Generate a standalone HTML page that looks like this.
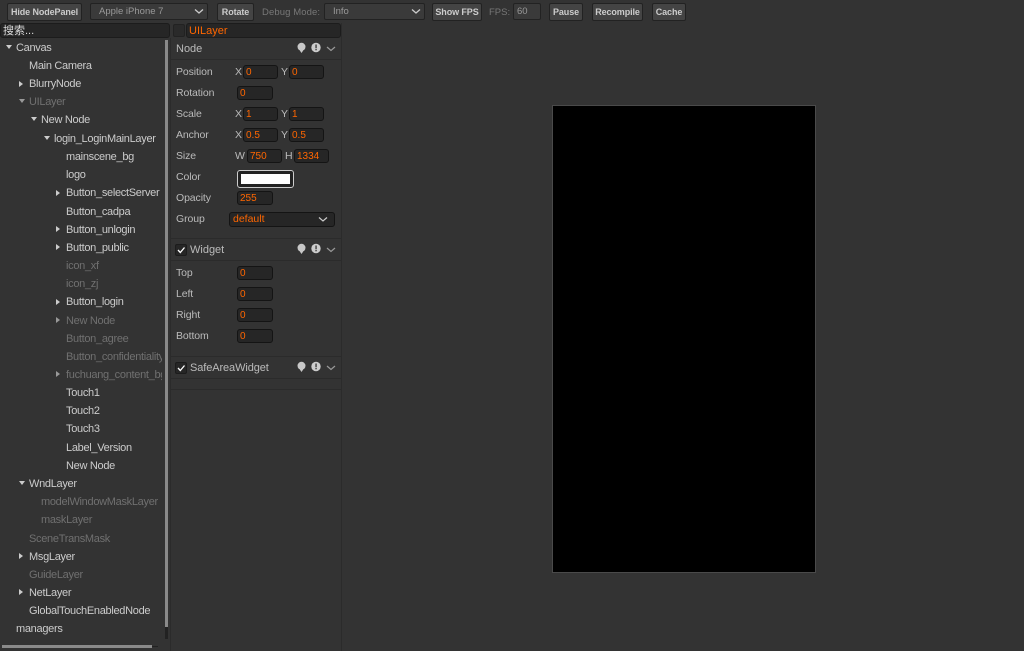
<!DOCTYPE html>
<html><head><meta charset="utf-8"><style>
html,body{margin:0;padding:0;width:1024px;height:651px;overflow:hidden;background:#333;}
body{position:relative;font-family:"Liberation Sans","Noto Sans CJK SC",sans-serif;font-size:11px;color:#ccc;}
.a,.b,.s,.t,.l,.i,.ar{position:absolute;box-sizing:border-box;white-space:nowrap;}
.b{top:3px;height:18px;background:#444;border:1px solid #222;border-radius:2px;color:#ccc;font-size:9px;font-weight:bold;line-height:17px;text-align:center;letter-spacing:-0.1px;}
.s{top:3px;height:17px;background:#3a3a3a;border:1px solid #222;border-radius:2px;color:#999;font-size:9.5px;line-height:16px;}
.t{line-height:14px;height:14px;font-size:11px;color:#ccc;margin-top:1px;letter-spacing:-0.3px;}
.g{color:#707070;}
.l{line-height:14px;height:14px;font-size:10.5px;color:#bbb;left:176px;letter-spacing:-0.1px;}
.x{line-height:14px;height:14px;font-size:10.5px;color:#bbb;position:absolute;}
.i{height:14px;background:#262626;border:1px solid #141414;border-radius:3px;color:#f60;font-size:10px;line-height:13px;padding-left:2px;}
.ar{width:0;height:0;}
.d{border-left:3px solid transparent;border-right:3px solid transparent;border-top:4px solid #ccc;margin-left:1px;}
.r{border-top:3px solid transparent;border-bottom:3px solid transparent;border-left:4px solid #ccc;margin-top:1px;}
.hr{position:absolute;left:171px;width:170px;height:1px;background:#2b2b2b;}
</style></head><body>
<div class="b" style="left:7px;width:75px">Hide NodePanel</div>
<div class="s" style="left:90px;width:118px;padding-left:8px">Apple iPhone 7<svg style="position:absolute;right:3px;top:4px" width="10" height="7"><path d="M1 1.5L5 5L9 1.5" stroke="#ccc" stroke-width="1.3" fill="none"/></svg></div>
<div class="b" style="left:217px;width:37px">Rotate</div>
<div class="a" style="left:262px;top:6px;color:#777;font-size:9.5px;line-height:13px;letter-spacing:0.1px">Debug Mode:</div>
<div class="s" style="left:324px;width:101px;padding-left:8px">Info<svg style="position:absolute;right:3px;top:4px" width="10" height="7"><path d="M1 1.5L5 5L9 1.5" stroke="#ccc" stroke-width="1.3" fill="none"/></svg></div>
<div class="b" style="left:432px;width:50px">Show FPS</div>
<div class="a" style="left:489px;top:6px;color:#777;font-size:9.5px;line-height:13px">FPS:</div>
<div class="s" style="left:513px;width:28px;padding-left:3px;background:#3a3a3a">60</div>
<div class="b" style="left:549px;width:34px">Pause</div>
<div class="b" style="left:592px;width:51px">Recompile</div>
<div class="b" style="left:652px;width:34px">Cache</div>

<div class="a" style="left:0;top:23px;width:170px;height:15px;background:#262626;border:1px solid #1c1c1c;border-radius:3px;color:#ddd;font-size:11px;line-height:14px;padding-left:2px">搜索...</div>
<div class="a" style="left:173px;top:24px;width:12px;height:13px;background:#2a2a2a;border:1px solid #222;border-radius:2px"></div>
<div class="a" style="left:186px;top:23px;width:155px;height:15px;background:#262626;border:1px solid #1c1c1c;border-radius:3px;color:#f60;font-size:11px;line-height:14px;padding-left:2px">UILayer</div>

<div class="ar d" style="left:5px;top:45px"></div><div class="t" style="left:16px;top:40px">Canvas</div>
<div class="t" style="left:29px;top:58px">Main Camera</div>
<div class="ar r" style="left:19px;top:80px"></div><div class="t" style="left:29px;top:76px">BlurryNode</div>
<div class="ar d" style="left:18px;top:99px;border-top-color:#999"></div><div class="t g" style="left:29px;top:94px">UILayer</div>
<div class="ar d" style="left:30px;top:117px"></div><div class="t" style="left:41px;top:112px">New Node</div>
<div class="ar d" style="left:43px;top:136px"></div><div class="t" style="left:54px;top:131px">login_LoginMainLayer</div>
<div class="t" style="left:66px;top:149px">mainscene_bg</div>
<div class="t" style="left:66px;top:167px">logo</div>
<div class="ar r" style="left:56px;top:189px"></div><div class="t" style="left:66px;top:185px">Button_selectServer</div>
<div class="t" style="left:66px;top:204px">Button_cadpa</div>
<div class="ar r" style="left:56px;top:225px"></div><div class="t" style="left:66px;top:222px">Button_unlogin</div>
<div class="ar r" style="left:56px;top:243px"></div><div class="t" style="left:66px;top:240px">Button_public</div>
<div class="t g" style="left:66px;top:258px">icon_xf</div>
<div class="t g" style="left:66px;top:276px">icon_zj</div>
<div class="ar r" style="left:56px;top:298px"></div><div class="t" style="left:66px;top:294px">Button_login</div>
<div class="ar r" style="left:56px;top:316px;border-left-color:#999"></div><div class="t g" style="left:66px;top:313px">New Node</div>
<div class="t g" style="left:66px;top:331px">Button_agree</div>
<div class="t g" style="left:66px;top:349px;width:96px;overflow:hidden">Button_confidentiality</div>
<div class="ar r" style="left:56px;top:370px;border-left-color:#999"></div><div class="t g" style="left:66px;top:367px;width:96px;overflow:hidden">fuchuang_content_bg</div>
<div class="t" style="left:66px;top:385px">Touch1</div>
<div class="t" style="left:66px;top:403px">Touch2</div>
<div class="t" style="left:66px;top:421px">Touch3</div>
<div class="t" style="left:66px;top:440px">Label_Version</div>
<div class="t" style="left:66px;top:458px">New Node</div>
<div class="ar d" style="left:18px;top:481px"></div><div class="t" style="left:29px;top:476px">WndLayer</div>
<div class="t g" style="left:41px;top:494px">modelWindowMaskLayer</div>
<div class="t g" style="left:41px;top:512px">maskLayer</div>
<div class="t g" style="left:29px;top:531px">SceneTransMask</div>
<div class="ar r" style="left:19px;top:552px"></div><div class="t" style="left:29px;top:549px">MsgLayer</div>
<div class="t g" style="left:29px;top:567px">GuideLayer</div>
<div class="ar r" style="left:19px;top:588px"></div><div class="t" style="left:29px;top:585px">NetLayer</div>
<div class="t" style="left:29px;top:603px">GlobalTouchEnabledNode</div>
<div class="t" style="left:16px;top:621px">managers</div>

<div class="a" style="left:165px;top:40px;width:3px;height:587px;background:#8a8a8a"></div>
<div class="a" style="left:165px;top:627px;width:3px;height:12px;background:#222"></div>
<div class="a" style="left:2px;top:645px;width:150px;height:3px;background:#8a8a8a"></div>
<div class="a" style="left:152px;top:646px;width:6px;height:1px;background:#222"></div>

<div class="a" style="left:170px;top:38px;width:1px;height:613px;background:#2b2b2b"></div>
<div class="a" style="left:341px;top:23px;width:1px;height:628px;background:#2b2b2b"></div>

<div class="x" style="left:176px;top:42px;font-size:11px">Node</div>
<div class="hr" style="top:59px"></div>
<div class="l" style="top:65px">Position</div>
<div class="x" style="left:235px;top:65px">X</div><div class="i" style="left:243px;top:65px;width:35px">0</div>
<div class="x" style="left:281px;top:65px">Y</div><div class="i" style="left:289px;top:65px;width:35px">0</div>
<div class="l" style="top:86px">Rotation</div><div class="i" style="left:237px;top:86px;width:36px">0</div>
<div class="l" style="top:107px">Scale</div>
<div class="x" style="left:235px;top:107px">X</div><div class="i" style="left:243px;top:107px;width:35px">1</div>
<div class="x" style="left:281px;top:107px">Y</div><div class="i" style="left:289px;top:107px;width:35px">1</div>
<div class="l" style="top:128px">Anchor</div>
<div class="x" style="left:235px;top:128px">X</div><div class="i" style="left:243px;top:128px;width:35px">0.5</div>
<div class="x" style="left:281px;top:128px">Y</div><div class="i" style="left:289px;top:128px;width:35px">0.5</div>
<div class="l" style="top:149px">Size</div>
<div class="x" style="left:235px;top:149px">W</div><div class="i" style="left:247px;top:149px;width:35px">750</div>
<div class="x" style="left:285px;top:149px">H</div><div class="i" style="left:294px;top:149px;width:35px">1334</div>
<div class="l" style="top:170px">Color</div>
<div class="a" style="left:237px;top:170px;width:57px;height:18px;background:#222;border:1px solid #ccc;border-radius:3px"><div style="margin:3px;height:10px;background:#fff"></div></div>
<div class="l" style="top:191px">Opacity</div><div class="i" style="left:237px;top:191px;width:36px">255</div>
<div class="l" style="top:212px">Group</div>
<div class="i" style="left:229px;top:212px;width:106px;height:15px;font-size:10.5px;padding-left:3px;line-height:13px">default<svg style="position:absolute;right:6px;top:3px" width="10" height="7"><path d="M1 1.5L5 5L9 1.5" stroke="#ccc" stroke-width="1.2" fill="none"/></svg></div>
<div class="hr" style="top:238px"></div>

<div class="a" style="left:175px;top:244px;width:12px;height:12px;background:#262626;border:1px solid #1c1c1c;border-radius:2px"><svg style="position:absolute;left:0;top:0" width="10" height="10"><path d="M2 5L4.3 7.5L8.5 2.500" stroke="#fff" stroke-width="1.3" fill="none"/></svg></div>
<div class="x" style="left:190px;top:243px;font-size:11px;color:#bbb">Widget</div>
<div class="hr" style="top:260px"></div>
<div class="l" style="top:266px">Top</div><div class="i" style="left:237px;top:266px;width:36px">0</div>
<div class="l" style="top:287px">Left</div><div class="i" style="left:237px;top:287px;width:36px">0</div>
<div class="l" style="top:308px">Right</div><div class="i" style="left:237px;top:308px;width:36px">0</div>
<div class="l" style="top:329px">Bottom</div><div class="i" style="left:237px;top:329px;width:36px">0</div>
<div class="hr" style="top:356px"></div>

<div class="a" style="left:175px;top:362px;width:12px;height:12px;background:#262626;border:1px solid #1c1c1c;border-radius:2px"><svg style="position:absolute;left:0;top:0" width="10" height="10"><path d="M2 5L4.3 7.5L8.5 2.500" stroke="#fff" stroke-width="1.3" fill="none"/></svg></div>
<div class="x" style="left:190px;top:361px;font-size:11px;color:#bbb;letter-spacing:-0.1px">SafeAreaWidget</div>
<div class="hr" style="top:378px"></div>
<div class="hr" style="top:389px"></div>

<svg class="a" style="left:295px;top:42px" width="42" height="14"><circle cx="6.500" cy="4.800" r="4" fill="#c8c8c8"/><path d="M4.800 8.500L8.200 8.500L6.500 11Z" fill="#c8c8c8"/><circle cx="21" cy="5.500" r="4.700" fill="#ccc"/><rect x="20.400" y="2.500" width="1.300" height="3.800" fill="#333"/><rect x="20.400" y="7" width="1.300" height="1.300" fill="#333"/><path d="M32 5L36 8.500L40 5" stroke="#999" stroke-width="1.200" fill="none"/></svg>
<svg class="a" style="left:295px;top:243px" width="42" height="14"><circle cx="6.500" cy="4.800" r="4" fill="#c8c8c8"/><path d="M4.800 8.500L8.200 8.500L6.500 11Z" fill="#c8c8c8"/><circle cx="21" cy="5.500" r="4.700" fill="#ccc"/><rect x="20.400" y="2.500" width="1.300" height="3.800" fill="#333"/><rect x="20.400" y="7" width="1.300" height="1.300" fill="#333"/><path d="M32 5L36 8.500L40 5" stroke="#999" stroke-width="1.200" fill="none"/></svg>
<svg class="a" style="left:295px;top:361px" width="42" height="14"><circle cx="6.500" cy="4.800" r="4" fill="#c8c8c8"/><path d="M4.800 8.500L8.200 8.500L6.500 11Z" fill="#c8c8c8"/><circle cx="21" cy="5.500" r="4.700" fill="#ccc"/><rect x="20.400" y="2.500" width="1.300" height="3.800" fill="#333"/><rect x="20.400" y="7" width="1.300" height="1.300" fill="#333"/><path d="M32 5L36 8.500L40 5" stroke="#999" stroke-width="1.200" fill="none"/></svg>

<div class="a" style="left:552px;top:105px;width:264px;height:468px;background:#000;border:1px solid #4a4a4a"></div>
</body></html>
